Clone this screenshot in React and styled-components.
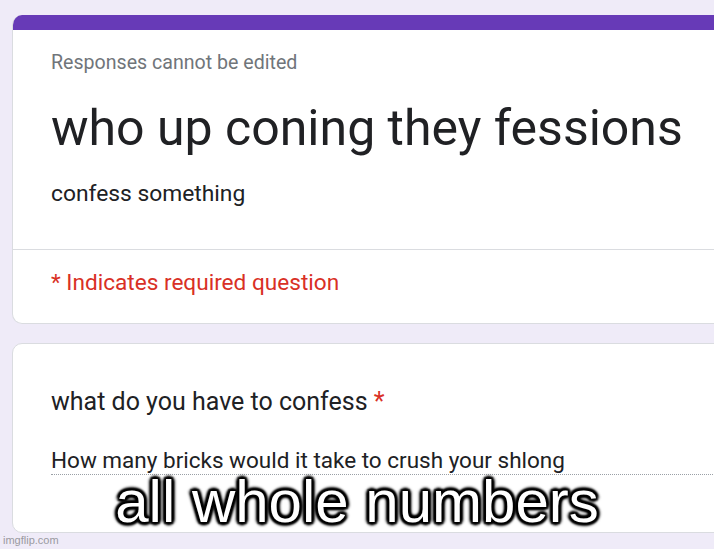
import React from 'react';
import styled, { createGlobalStyle } from 'styled-components';

const GlobalStyle = createGlobalStyle`
  html, body {
    margin: 0;
    padding: 0;
    background: #efebf8;
    overflow: hidden;
  }
  body {
    font-family: Roboto, "Liberation Sans", Arial, sans-serif;
    color: #202124;
  }
`

const Page = styled.div`
  position: relative;
  width: 714px;
  height: 549px;
  padding: 15px 0 0 12px;
  box-sizing: border-box;
  display: flex;
  flex-direction: column;
  gap: 19px;
`

const Card = styled.div`
  width: 760px;
  background: #fff;
  border: 1px solid #dadce0;
  border-top: ${p => (p.accent ? 'none' : '1px solid #dadce0')};
  border-radius: 10px;
  overflow: hidden;
`

const TopBar = styled.div`
  height: 15px;
  background: #673ab7;
`

const Section = styled.div`
  padding: ${p => p.pad};
  border-bottom: ${p => (p.divided ? '1px solid #dadce0' : 'none')};
`

const Notice = styled.div`
  font-size: 19.6px;
  line-height: 24px;
  color: #70757a;
`

const Title = styled.h1`
  margin: 23px 0 0;
  font-size: 50px;
  line-height: 60px;
  font-weight: 400;
  color: #202124;
`

const Description = styled.div`
  margin-top: 22px;
  font-size: 22.8px;
  line-height: 28px;
`

const Required = styled.div`
  font-size: 22.6px;
  line-height: 28px;
  color: #d93025;
`

const Question = styled.div`
  font-size: 25px;
  line-height: 30px;
  color: #202124;
`

const Star = styled.span`
  color: #d93025;
`

const Answer = styled.div`
  margin-top: 29px;
  font-size: 22.5px;
  line-height: 28px;
  color: #202124;
  border-bottom: 1px dotted #9aa0a6;
`

const Caption = styled.div`
  position: absolute;
  left: 0;
  right: 0;
  top: 469px;
  text-align: center;
  font-family: "Liberation Sans", Arial, sans-serif;
  font-size: 60px;
  line-height: 66px;
  color: #fff;
  text-shadow:
    2px 2px 2px #000, -2px -2px 2px #000, 2px -2px 2px #000, -2px 2px 2px #000,
    0 3px 3px #000, 0 -3px 3px #000, 3px 0 3px #000, -3px 0 3px #000,
    0 0 5px #000;
`

const Watermark = styled.div`
  position: absolute;
  left: 3px;
  bottom: 2px;
  font-family: "Liberation Sans", Arial, sans-serif;
  font-size: 11px;
  line-height: 13px;
  color: #9a9aa0;
`

const App = () => {
  return (<>
    <GlobalStyle />
    <Page>
      <Card accent>
        <TopBar />
        <Section pad="21px 0 41px 38px" divided>
          <Notice>Responses cannot be edited</Notice>
          <Title>who up coning they fessions</Title>
          <Description>confess something</Description>
        </Section>
        <Section pad="19px 0 26px 38px">
          <Required>* Indicates required question</Required>
        </Section>
      </Card>
      <Card>
        <Section pad="43px 0 57px 38px">
          <Question>what do you have to confess <Star>*</Star></Question>
          <Answer>How many bricks would it take to crush your shlong</Answer>
        </Section>
      </Card>
      <Caption>all whole numbers</Caption>
      <Watermark>imgflip.com</Watermark>
    </Page>
  </>);
}

export default App;
